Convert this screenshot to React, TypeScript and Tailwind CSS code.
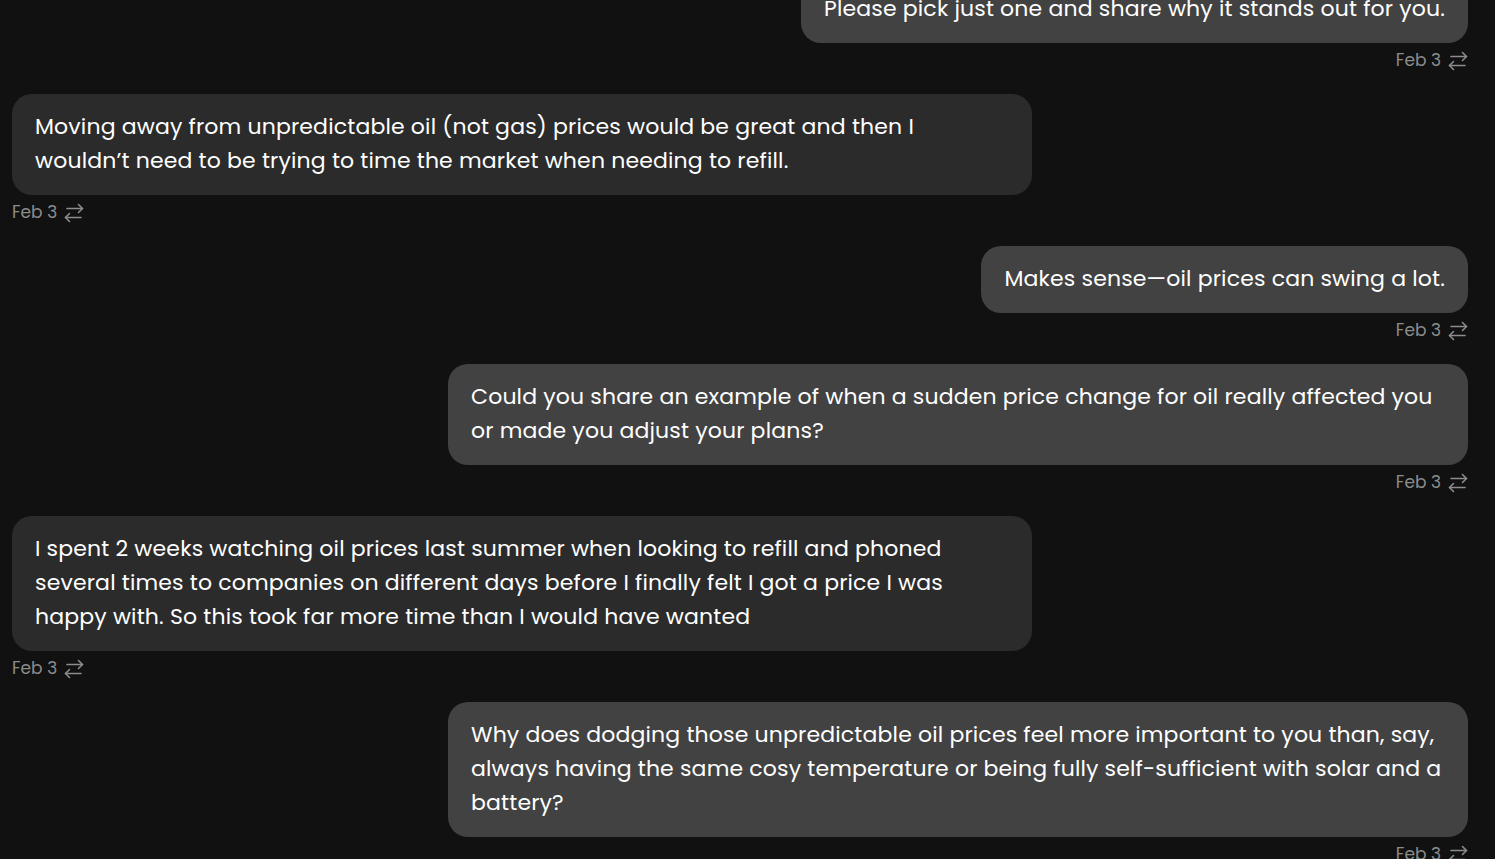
type Msg = { id: number; fromMe: boolean; text: string; date: string };

const messages: Msg[] = [
  { id: 1, fromMe: true, text: "Please pick just one and share why it stands out for you.", date: "Feb 3" },
  {
    id: 2,
    fromMe: false,
    text: "Moving away from unpredictable oil (not gas) prices would be great and then I wouldn\u2019t need to be trying to time the market when needing to refill.",
    date: "Feb 3",
  },
  { id: 3, fromMe: true, text: "Makes sense\u2014oil prices can swing a lot.", date: "Feb 3" },
  {
    id: 4,
    fromMe: true,
    text: "Could you share an example of when a sudden price change for oil really affected you or made you adjust your plans?",
    date: "Feb 3",
  },
  {
    id: 5,
    fromMe: false,
    text: "I spent 2 weeks watching oil prices last summer when looking to refill and phoned several times to companies on different days before I finally felt I got a price I was happy with. So this took far more time than I would have wanted",
    date: "Feb 3",
  },
  {
    id: 6,
    fromMe: true,
    text: "Why does dodging those unpredictable oil prices feel more important to you than, say, always having the same cosy temperature or being fully self-sufficient with solar and a battery?",
    date: "Feb 3",
  },
];

// swap arrows, top one pointing right, bottom one left
function SwapIcon() {
  return (
    <svg width="20" height="20" viewBox="0 0 20 20" fill="none" stroke="currentColor" strokeWidth="1.6" strokeLinecap="round" strokeLinejoin="round">
      <path d="M3 5.5h15.5" />
      <path d="M14.5 1.5l4 4-4 4" />
      <path d="M17 14.5H1.5" />
      <path d="M5.5 10.5l-4 4 4 4" />
    </svg>
  );
}

export default function App() {
  return (
    <div
      className="h-[859px] overflow-hidden bg-[#111111] pl-3 pr-[27px]"
      style={{ fontFamily: "Poppins, 'Open Sans', sans-serif" }}
    >
      <div className="flex flex-col gap-[21px] -mt-[24px]">
        {messages.map((m) => (
          <div key={m.id} className={`flex flex-col ${m.fromMe ? "items-end" : "items-start"}`}>
            <div
              className={`max-w-[1020px] rounded-[20px] px-[23px] pt-4 pb-[17px] text-[22px] leading-[34px] tracking-[0.16px] text-white ${
                m.fromMe ? "bg-[#424242]" : "bg-[#2b2b2b]"
              }`}
            >
              {m.text}
            </div>
            <div className="mt-[6px] flex h-6 items-center gap-[7px] text-[17px] text-[#8c8c8c]">
              <span>{m.date}</span>
              <SwapIcon />
            </div>
          </div>
        ))}
      </div>
    </div>
  );
}
